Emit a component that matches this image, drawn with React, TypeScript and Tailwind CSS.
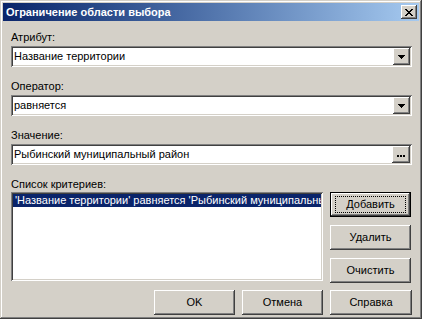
const raised =
  "shadow-[inset_-1px_-1px_#404040,inset_1px_1px_#ffffff,inset_-2px_-2px_#808080,inset_2px_2px_#d4d0c8]";
const sunken =
  "shadow-[inset_1px_1px_#808080,inset_-1px_-1px_#ffffff,inset_2px_2px_#404040,inset_-2px_-2px_#d4d0c8]";

const DropArrow = () => (
  <svg width="7" height="4" viewBox="0 0 7 4">
    <path d="M0 0h7L3.5 4z" fill="#000" shapeRendering="crispEdges" />
  </svg>
);

const Dots = () => (
  <svg width="8" height="2" viewBox="0 0 8 2" shapeRendering="crispEdges">
    <path d="M0 0h2v2h-2zM3 0h2v2h-2zM6 0h2v2h-2z" fill="#000" />
  </svg>
);

const Combo = ({ value, dots }: { value: string; dots?: boolean }) => (
  <div className={`flex h-[21px] items-stretch bg-white p-[2px] ${sunken}`}>
    <div className="flex-1 pl-[1px] leading-[17px]">{value}</div>
    <div className={`flex items-center justify-center bg-[#d4d0c8] ${dots ? "w-[18px] pt-[2px]" : "w-[17px]"} ${raised}`}>
      {dots ? <Dots /> : <DropArrow />}
    </div>
  </div>
);

const Button = ({ label, wide, isDefault }: { label: string; wide?: boolean; isDefault?: boolean }) => (
  <div
    className={`flex h-[25px] items-center justify-center bg-[#d4d0c8] ${wide ? "w-[82px]" : "w-[81px]"} ${
      isDefault
        ? "shadow-[inset_0_0_0_1px_#000,inset_-2px_-2px_#404040,inset_2px_2px_#ffffff,inset_-3px_-3px_#808080]"
        : raised
    }`}
  >
    {isDefault ? (
      <span className="flex h-[17px] w-[71px] items-center justify-center border border-dotted border-black">
        {label}
      </span>
    ) : (
      label
    )}
  </div>
);

export default function App() {
  return (
    <div
      className="flex h-[319px] w-[422px] flex-col bg-[#d4d0c8] p-[3px] text-[11px] text-black shadow-[inset_-1px_-1px_#404040,inset_1px_1px_#d4d0c8,inset_-2px_-2px_#808080,inset_2px_2px_#ffffff]"
      style={{ fontFamily: '"Liberation Sans", Arial, sans-serif' }}
    >
      <div className="flex h-[18px] items-center justify-between bg-gradient-to-r from-[#0a246a] to-[#a6caf0] pl-[3px] pr-[2px]">
        <span className="text-[11px] font-bold text-white">Ограничение области выбора</span>
        <div className={`flex h-[14px] w-[16px] items-center justify-center bg-[#d4d0c8] ${raised}`}>
          <svg width="8" height="7" viewBox="0 0 8 7" shapeRendering="crispEdges">
            <path d="M0 0h2v1h1v1h2v-1h1v-1h2v1h-1v1h-1v1h-1v1h1v1h1v1h1v1h-2v-1h-1v-1h-2v1h-1v1h-2v-1h1v-1h1v-1h1v-1h-1v-1h-1v-1h-1z" fill="#000" />
          </svg>
        </div>
      </div>

      <div className="flex flex-1 flex-col pl-[8px] pr-[7px]">
        <div className="mt-[10px] leading-[13px]">Атрибут:</div>
        <div className="mt-[2px]">
          <Combo value="Название территории" />
        </div>
        <div className="mt-[13px] leading-[13px]">Оператор:</div>
        <div className="mt-[2px]">
          <Combo value="равняется" />
        </div>
        <div className="mt-[13px] leading-[13px]">Значение:</div>
        <div className="mt-[2px]">
          <Combo value="Рыбинский муниципальный район" dots />
        </div>
        <div className="mt-[13px] leading-[13px]">Список критериев:</div>

        <div className="mt-[1px] flex gap-[7px]">
          <div className={`h-[89px] w-[312px] overflow-hidden bg-white p-[2px] ${sunken}`}>
            <div className="h-[13px] overflow-hidden whitespace-nowrap bg-[#0a246a] pl-[2px] leading-[13px] text-white">
              'Название территории' равняется 'Рыбинский муниципальный район'
            </div>
          </div>
          <div className="flex flex-col gap-[8px]">
            <Button label="Добавить" isDefault />
            <Button label="Удалить" />
            <Button label="Очистить" />
          </div>
        </div>

        <div className="mt-[7px] flex justify-end gap-[7px]">
          <Button label="OK" />
          <Button label="Отмена" />
          <Button label="Справка" wide />
        </div>
      </div>
    </div>
  );
}
